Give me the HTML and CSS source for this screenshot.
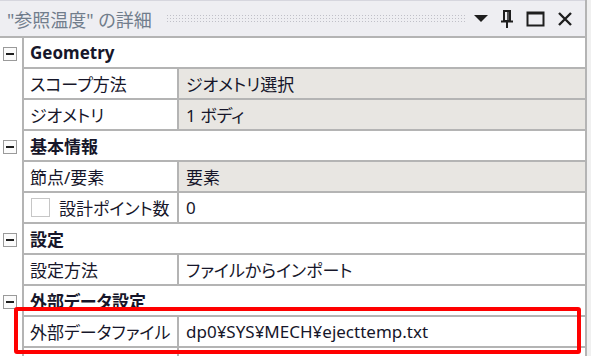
FILE: index.html
```html
<!DOCTYPE html>
<html lang="ja">
  <head>
    <title>詳細</title>
    <meta charset="UTF-8" />
    <meta name="viewport" content="width=device-width" />
    <link rel="stylesheet" href="styles.css">
  </head>
  <body>
    <!-- Details panel -->
    <div class="panel">
      <div class="titlebar">
        <span class="title">"参照温度" の詳細</span>
        <span class="grip"></span>
        <div class="tools">
          <svg width="14" height="8" viewBox="0 0 14 8"><polygon points="0,0 14,0 7,7" fill="#1e1e1e"/></svg>
          <svg width="14" height="20" viewBox="0 0 14 20">
            <path d="M4 2h6v10H4z" fill="none" stroke="#1e1e1e" stroke-width="2"/>
            <path d="M8 3v8" stroke="#1e1e1e" stroke-width="1.5"/>
            <path d="M1 12.5h12" stroke="#1e1e1e" stroke-width="2"/>
            <path d="M7 13v6" stroke="#1e1e1e" stroke-width="2"/>
          </svg>
          <svg width="19" height="16" viewBox="0 0 19 16">
            <rect x="1.5" y="1.5" width="16" height="13" fill="none" stroke="#1e1e1e" stroke-width="2"/>
            <path d="M1 2.5h17" stroke="#1e1e1e" stroke-width="2"/>
          </svg>
          <svg width="16" height="16" viewBox="0 0 16 16">
            <path d="M2 2l12 12M14 2L2 14" stroke="#1e1e1e" stroke-width="2.4"/>
          </svg>
        </div>
      </div>

      <!-- Property grid -->
      <div class="grid">
        <div class="row">
          <div class="gutter"><span class="toggle"></span></div>
          <div class="group">Geometry</div>
        </div>
        <div class="row">
          <div class="gutter"></div>
          <div class="name">スコープ方法</div>
          <div class="value readonly">ジオメトリ選択</div>
        </div>
        <div class="row">
          <div class="gutter"></div>
          <div class="name">ジオメトリ</div>
          <div class="value readonly">1 ボディ</div>
        </div>
        <div class="row">
          <div class="gutter"><span class="toggle"></span></div>
          <div class="group">基本情報</div>
        </div>
        <div class="row">
          <div class="gutter"></div>
          <div class="name">節点/要素</div>
          <div class="value readonly">要素</div>
        </div>
        <div class="row">
          <div class="gutter"></div>
          <div class="name"><span class="check"></span>設計ポイント数</div>
          <div class="value">0</div>
        </div>
        <div class="row">
          <div class="gutter"><span class="toggle"></span></div>
          <div class="group">設定</div>
        </div>
        <div class="row">
          <div class="gutter"></div>
          <div class="name">設定方法</div>
          <div class="value">ファイルからインポート</div>
        </div>
        <div class="row">
          <div class="gutter"><span class="toggle"></span></div>
          <div class="group">外部データ設定</div>
        </div>
        <div class="row">
          <div class="gutter"></div>
          <div class="name">外部データファイル</div>
          <div class="value">dp0¥SYS¥MECH¥ejecttemp.txt</div>
        </div>
        <div class="row">
          <div class="gutter"></div>
          <div class="name"></div>
          <div class="value"></div>
        </div>
      </div>

      <!-- Highlight box -->
      <div class="highlight"></div>
    </div>
  </body>
</html>
```

FILE: styles.css
```css
* {
  box-sizing: border-box;
}

body {
  margin: 0;
  background-color: #f0f0f0;
  font-family: "Noto Sans", "Noto Sans CJK JP", sans-serif;
  font-feature-settings: "palt";
  font-size: 17px;
  color: #16162a;
  overflow: hidden;
}

.panel {
  position: relative;
  width: 587px;
  height: 356px;
  background-color: #ffffff;
  border-right: 2px solid #b4b4b4;
  overflow: hidden;
}

/* title bar */
.titlebar {
  display: flex;
  align-items: center;
  height: 36px;
  padding: 0 12px 0 7px;
  background-color: #eeeef2;
  border-top: 1px solid #d6d6de;
}

.title {
  color: #717d8c;
  font-size: 18px;
  white-space: nowrap;
}

.grip {
  flex: 1;
  height: 9px;
  margin: 0 8px 0 14px;
  background-image: radial-gradient(circle, #c0c0c8 0.8px, transparent 1px);
  background-size: 3px 3px;
}

.tools {
  display: flex;
  align-items: center;
  gap: 12px;
}

.tools svg {
  display: block;
}

/* grid */
.grid {
  border-top: 2px solid #b4b4b4;
}

.row {
  display: flex;
  height: 31px;
}

.gutter {
  flex: none;
  width: 24px;
  display: flex;
  align-items: center;
  padding-left: 3px;
  border-right: 2px solid #b4b4b4;
}

.toggle {
  position: relative;
  width: 14px;
  height: 14px;
  border: 1px solid #9a9a9a;
  background-color: #fbfbfb;
}

.toggle::after {
  content: "";
  position: absolute;
  left: 2px;
  right: 2px;
  top: 5px;
  height: 2px;
  background-color: #1e1e1e;
}

.group,
.name,
.value {
  display: flex;
  align-items: center;
  border-bottom: 2px solid #b4b4b4;
  white-space: nowrap;
}

.group {
  flex: 1;
  padding-left: 6px;
  font-weight: bold;
}

.name {
  flex: none;
  width: 155px;
  padding-left: 6px;
  border-right: 2px solid #b4b4b4;
}

.value {
  flex: 1;
  padding-left: 7px;
}

.readonly {
  background-color: #e8e6e2;
}

.check {
  width: 19px;
  height: 19px;
  margin: 0 9px 0 1px;
  border: 1px solid #c6c6c6;
  background-color: #ffffff;
}

/* red callout */
.highlight {
  position: absolute;
  left: 14px;
  top: 307px;
  width: 567px;
  height: 47px;
  border: 4px solid #ff0000;
  border-radius: 3px;
}
```
